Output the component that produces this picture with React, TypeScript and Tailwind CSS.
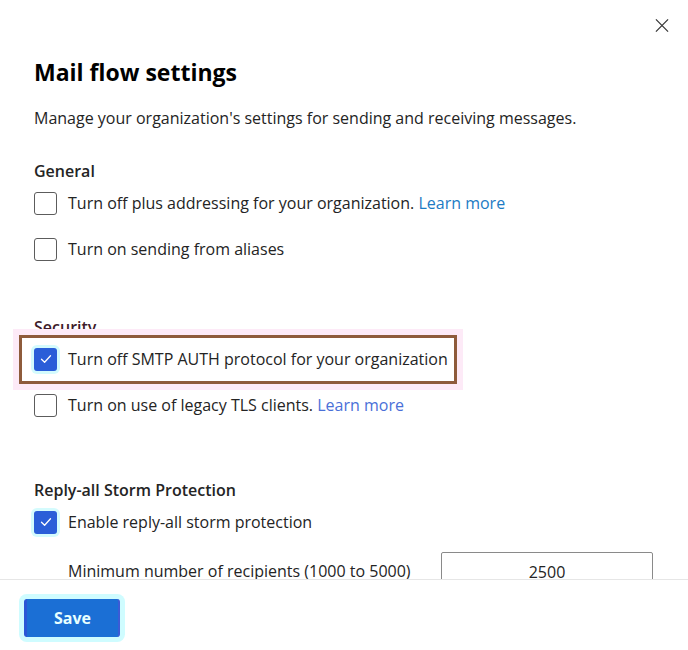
import React from "react";

function Box({ checked }: { checked?: boolean }) {
  if (checked) {
    return (
      <span className="flex h-[23px] w-[23px] shrink-0 items-center justify-center rounded-[3px] bg-[#2a5ed8] shadow-[0_0_0_3px_#d4fbfd]">
        <svg width="14" height="14" viewBox="0 0 14 14" fill="none">
          <path d="M2.5 7.3 L5.6 10.2 L11.5 3.8" stroke="white" strokeWidth="1.3" strokeLinecap="round" strokeLinejoin="round" />
        </svg>
      </span>
    );
  }
  return <span className="h-[23px] w-[23px] shrink-0 rounded-[3px] border border-[#5c5c5c] bg-white" />;
}

function Row({ checked, children, className = "" }: { checked?: boolean; children: React.ReactNode; className?: string }) {
  return (
    <div className={`flex h-[24px] items-center gap-[11px] ${className}`}>
      <Box checked={checked} />
      <span className="whitespace-nowrap">{children}</span>
    </div>
  );
}

export default function App() {
  return (
    <div
      className="relative flex h-[650px] w-[688px] flex-col overflow-hidden bg-white text-[16px] text-[#242424]"
      style={{ fontFamily: '"Open Sans", "Noto Sans", sans-serif' }}
    >
      <button className="absolute right-[19px] top-[18px] flex h-[14px] w-[14px] items-center justify-center">
        <svg width="15" height="15" viewBox="0 0 15 15">
          <path d="M1 1 L14 14 M14 1 L1 14" stroke="#333" strokeWidth="1.3" />
        </svg>
      </button>

      <div className="h-[580px] shrink-0 overflow-hidden border-b border-[#e6e6e6] px-[34px]">
        <h1 className="mt-[56px] text-[23px] font-bold leading-[32px] text-black">Mail flow settings</h1>
        <p className="mt-[18px] leading-[24px]">Manage your organization's settings for sending and receiving messages.</p>

        <h2 className="mt-[29px] font-semibold leading-[24px]">General</h2>
        <Row className="mt-[8px]">
          Turn off plus addressing for your organization. <a className="text-[#1c7bc4]">Learn more</a>
        </Row>
        <Row className="mt-[22px]">Turn on sending from aliases</Row>

        <h2 className="mt-[54px] font-semibold leading-[24px] text-[#3e1b2a]">Security</h2>
        <div className="relative mt-[8px]">
          <div className="pointer-events-none absolute left-[-15px] top-[-12px] h-[49px] w-[438px] border-[3px] border-[#8e5b3b] shadow-[0_0_0_6px_#fdeaf7]" />
          <Row checked>Turn off SMTP AUTH protocol for your organization</Row>
        </div>
        <Row className="mt-[22px]">
          Turn on use of legacy TLS clients. <a className="text-[#4a70d8]">Learn more</a>
        </Row>

        <h2 className="mt-[61px] font-semibold leading-[24px]">Reply-all Storm Protection</h2>
        <Row checked className="mt-[8px]">Enable reply-all storm protection</Row>

        <div className="mt-[18px] flex items-start">
          <span className="ml-[34px] mt-[7px] w-[373px] whitespace-nowrap leading-[24px]">Minimum number of recipients (1000 to 5000)</span>
          <div className="flex h-[40px] w-[212px] justify-center rounded-[2px] border border-[#8a8a8a] pt-[7px] leading-[24px]">
            2500
          </div>
        </div>
      </div>

      <div className="pl-[24px] pt-[19px]">
        <button className="flex h-[38px] w-[96px] items-center justify-center rounded-[3px] border-l-[3px] border-r-[2px] border-l-[#2b57d5] border-r-[#3b5bd6] bg-[#1b6fd5] text-[16px] font-bold text-[#e8ffff] shadow-[0_0_0_5px_#cffcff]">
          Save
        </button>
      </div>
    </div>
  );
}
